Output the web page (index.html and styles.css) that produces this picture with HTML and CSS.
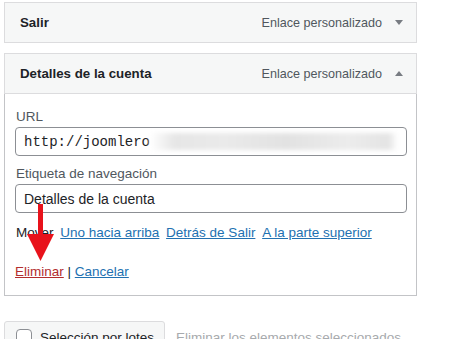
FILE: index.html
```html
<!DOCTYPE html>
<html lang="es">
<head>
  <meta charset="UTF-8">
  <title>Menú</title>
  <link rel="stylesheet" href="styles.css">
</head>
<body>
  <div class="menu">
    <div class="menu-item">
      <div class="item-bar">
        <span class="item-title">Salir</span>
        <span class="item-type">Enlace personalizado</span>
        <span class="toggle down"></span>
      </div>
    </div>

    <div class="menu-item open">
      <div class="item-bar">
        <span class="item-title">Detalles de la cuenta</span>
        <span class="item-type">Enlace personalizado</span>
        <span class="toggle up"></span>
      </div>
      <div class="item-settings">
        <label class="field-label">URL</label>
        <div class="field url-field">
          <span>http://joomlero</span>
          <span class="blur"></span>
        </div>
        <label class="field-label">Etiqueta de navegación</label>
        <div class="field">Detalles de la cuenta</div>
        <div class="move-row">
          Mover <a href="#">Uno hacia arriba</a> <a href="#">Detrás de Salir</a> <a href="#">A la parte superior</a>
        </div>
        <div class="actions">
          <a href="#" class="delete">Eliminar</a> | <a href="#">Cancelar</a>
        </div>
      </div>
      <!-- red arrow pointing at "Eliminar" -->
      <svg class="pointer" width="30" height="60" viewBox="0 0 30 60">
        <rect x="12" y="0" width="5" height="32" fill="#e8121b"/>
        <polygon points="1,30 28,30 14.5,57" fill="#e8121b"/>
      </svg>
    </div>

    <div class="bulk">
      <div class="bulk-btn"><span class="check"></span>Selección por lotes</div>
      <span class="bulk-delete">Eliminar los elementos seleccionados</span>
    </div>
  </div>
</body>
</html>
```

FILE: styles.css
```css
body {
  margin: 0;
  background: #fff;
  font-family: 'Liberation Sans', Arial, sans-serif;
  font-size: 13.5px;
  color: #1d2327;
  overflow: hidden;
}

.menu {
  width: 413px;
  padding: 2px 0 0 4px;
}

.menu-item {
  margin-bottom: 10px;
  position: relative;
}

.item-bar {
  display: flex;
  align-items: center;
  height: 39px;
  padding: 0 10px 0 15px;
  background: #f6f7f7;
  border: 1px solid #dcdcde;
}

.item-title {
  flex: 1;
  font-size: 13.3px;
  font-weight: 700;
}

.item-type {
  color: #50575e;
  font-size: 12.6px;
  margin-right: 13px;
}

.toggle {
  width: 0;
  height: 0;
  border-left: 4px solid transparent;
  border-right: 4px solid transparent;
  margin-right: 3px;
}
.toggle.down { border-top: 5px solid #787c82; }
.toggle.up { border-bottom: 5px solid #787c82; }

.item-settings {
  border: 1px solid #c3c4c7;
  border-top: none;
  padding: 13px 9px 14px 10px;
}

.field-label {
  display: block;
  line-height: 19px;
  padding-left: 1px;
  color: #50575e;
  margin-bottom: 1px;
}

.field {
  display: flex;
  align-items: center;
  height: 27px;
  padding: 0 8px;
  border: 1px solid #8c8f94;
  border-radius: 4px;
  font-size: 14px;
  margin-bottom: 8px;
}

.url-field {
  font-family: 'Liberation Mono', monospace;
}

.blur {
  flex: 1;
  height: 17px;
  background: linear-gradient(90deg, #fff 0%, #e6e6e6 10%, #eaeaea 30%, #e2e2e2 55%, #ececec 80%, #e4e4e4 96%, #fff 100%);
  filter: blur(2px);
}

.move-row {
  line-height: 19px;
  margin-top: 10px;
  padding-left: 1px;
}

.move-row a {
  margin-left: 3px;
}

a {
  color: #2271b1;
}

.actions {
  margin-top: 20px;
  line-height: 19px;
}

a.delete {
  color: #b32d2e;
}

.pointer {
  position: absolute;
  left: 22px;
  top: 151px;
}

.bulk {
  display: flex;
  align-items: center;
  margin-top: 25px;
}

.bulk-btn {
  display: flex;
  align-items: center;
  gap: 8px;
  height: 32px;
  width: 161px;
  box-sizing: border-box;
  padding: 0 10px 0 11px;
  white-space: nowrap;
  background: #f6f7f7;
  border: 1px solid #dcdcde;
  border-radius: 3px;
}

.check {
  flex: none;
  width: 14px;
  height: 14px;
  border: 1px solid #8c8f94;
  border-radius: 4px;
  background: #fff;
}

.bulk-delete {
  margin-left: 11px;
  white-space: nowrap;
  color: #a7aaad;
}
```
